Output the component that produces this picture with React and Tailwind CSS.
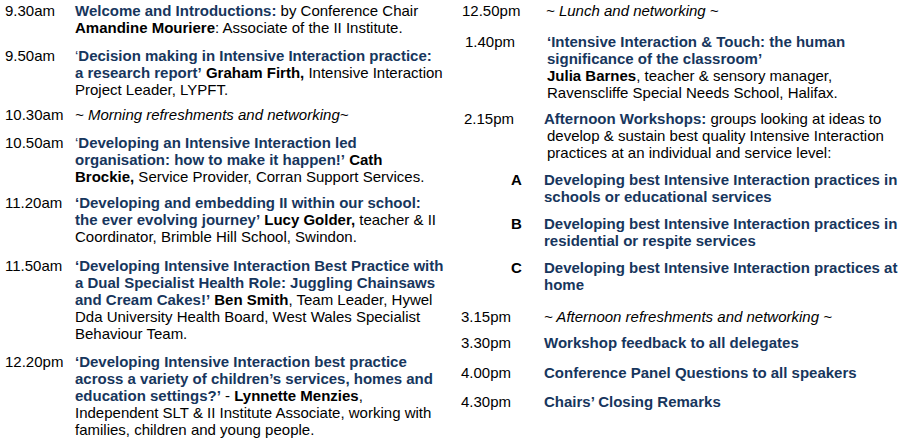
import React from "react";

const Blue = ({ children }) => <span className="font-bold text-[#17365d]">{children}</span>;
const Name = ({ children }) => <span className="font-bold">{children}</span>;

const leftRows = [
  {
    time: "9.30am",
    mb: "mb-[11px]",
    body: (
      <>
        <Blue>Welcome and Introductions:</Blue> by Conference Chair <Name>Amandine Mouriere</Name>: Associate of the II Institute.
      </>
    ),
  },
  {
    time: "9.50am",
    mb: "mb-[8px]",
    body: (
      <>
        <span className="text-[#17365d]">‘</span>
        <Blue>Decision making in Intensive Interaction practice: a research report’</Blue> <Name>Graham Firth,</Name> Intensive Interaction Project Leader, LYPFT.
      </>
    ),
  },
  {
    time: "10.30am",
    mb: "mb-[11px]",
    body: <i>~ Morning refreshments and networking~</i>,
  },
  {
    time: "10.50am",
    mb: "mb-[9px]",
    body: (
      <>
        <span className="text-[#17365d]">‘</span>
        <Blue>Developing an Intensive Interaction led organisation: how to make it happen!’</Blue> <Name>Cath Brockie,</Name> Service Provider, Corran Support Services.
      </>
    ),
  },
  {
    time: "11.20am",
    mb: "mb-[12px]",
    body: (
      <>
        <Blue>‘Developing and embedding II within our school: the ever evolving journey’</Blue> <Name>Lucy Golder,</Name> teacher &amp; II Coordinator, Brimble Hill School, Swindon.
      </>
    ),
  },
  {
    time: "11.50am",
    mb: "mb-[11px]",
    body: (
      <>
        <Blue>‘Developing Intensive Interaction Best Practice with a Dual Specialist Health Role: Juggling Chainsaws and Cream Cakes!’</Blue> <Name>Ben Smith</Name>, Team Leader, Hywel Dda University Health Board, West Wales Specialist Behaviour Team.
      </>
    ),
  },
  {
    time: "12.20pm",
    mb: "",
    body: (
      <>
        <Blue>‘Developing Intensive Interaction best practice across a variety of children’s services, homes and education settings?’</Blue> - <Name>Lynnette Menzies</Name>, Independent SLT &amp; II Institute Associate, working with families, children and young people.
      </>
    ),
  },
];

const workshops = [
  { key: "A", text: "Developing best Intensive Interaction practices in schools or educational services" },
  { key: "B", text: "Developing best Intensive Interaction practices in residential or respite services" },
  { key: "C", text: "Developing best Intensive Interaction practices at home" },
];

export default function App() {
  return (
    <div className="w-[899px] h-[444px] bg-white text-black overflow-hidden font-['Liberation_Sans',Arial,sans-serif] text-[15px] leading-[17px] flex">
      {/* Left column */}
      <div className="w-[462px] pl-[5px] pt-[2px]">
        {leftRows.map((row) => (
          <div key={row.time} className={`flex ${row.mb}`}>
            <div className="w-[70px] shrink-0">{row.time}</div>
            <div className="w-[369px]">{row.body}</div>
          </div>
        ))}
      </div>

      {/* Right column */}
      <div className="flex-1 pt-[2px]">
        <div className="flex mb-[14px]">
          <div className="w-[84px] shrink-0 pl-[1px]">12.50pm</div>
          <div className="pl-[1px]"><i>~ Lunch and networking ~</i></div>
        </div>
        <div className="flex mb-[9px]">
          <div className="w-[84px] shrink-0 pl-[4px]">1.40pm</div>
          <div className="pl-[2px]">
            <Blue>‘Intensive Interaction &amp; Touch: the human significance of the classroom’</Blue>
            <br />
            <Name>Julia Barnes</Name>, teacher &amp; sensory manager,
            <br />
            Ravenscliffe Special Needs School, Halifax.
          </div>
        </div>
        <div className="flex mb-[10px]">
          <div className="w-[83px] shrink-0 pl-[3px]">2.15pm</div>
          <div className="w-[355px]">
            <Blue>Afternoon Workshops:</Blue> groups looking at ideas to
            <div className="pl-[3px]">
              develop &amp; sustain best quality Intensive Interaction
              <br />
              practices at an individual and service level:
            </div>
          </div>
        </div>
        {workshops.map((w) => (
          <div key={w.key} className="flex mb-[10px]">
            <div className="w-[83px] shrink-0 pl-[50px] font-bold">{w.key}</div>
            <div className="w-[355px] font-bold text-[#17365d]">{w.text}</div>
          </div>
        ))}
        <div className="flex mt-[15px] mb-[9px]">
          <div className="w-[83px] shrink-0">3.15pm</div>
          <div><i>~ Afternoon refreshments and networking ~</i></div>
        </div>
        <div className="flex mb-[13px]">
          <div className="w-[83px] shrink-0">3.30pm</div>
          <Blue>Workshop feedback to all delegates</Blue>
        </div>
        <div className="flex mb-[12px]">
          <div className="w-[83px] shrink-0">4.00pm</div>
          <Blue>Conference Panel Questions to all speakers</Blue>
        </div>
        <div className="flex">
          <div className="w-[83px] shrink-0">4.30pm</div>
          <Blue>Chairs’ Closing Remarks</Blue>
        </div>
      </div>
    </div>
  );
}
